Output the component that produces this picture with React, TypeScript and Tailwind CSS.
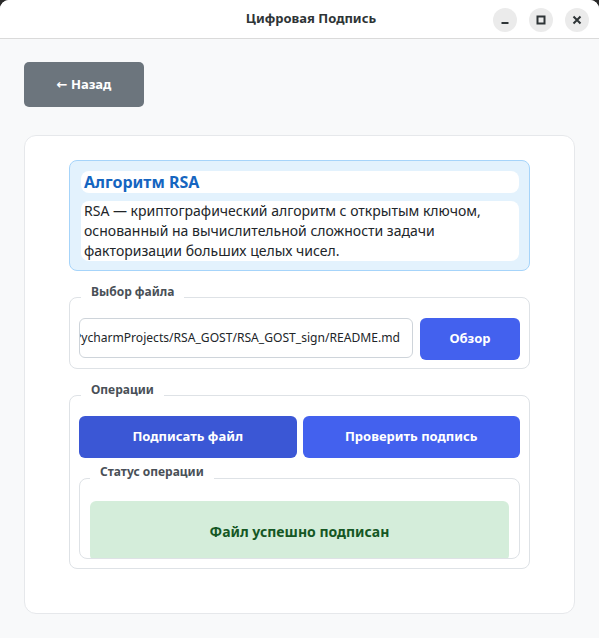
import React from 'react';

const font = { fontFamily: '"Noto Sans", "DejaVu Sans", sans-serif' };

const Group = ({ title, className, children }: { title: string; className?: string; children: React.ReactNode }) => (
  <div className={`relative rounded-[8px] border border-[#dee2e6] ${className ?? ''}`}>
    <span className="absolute left-[11px] top-[-14px] bg-white px-[10px] text-[12px] font-bold leading-[16px] text-[#495057]">
      {title}
    </span>
    {children}
  </div>
);

export default function App() {
  return (
    <div className="h-[638px] w-[599px] bg-[#2a2a2a]" style={font}>
      <div className="flex h-full flex-col overflow-hidden rounded-t-[9px] bg-[#f8f9fa]">
        {/* title bar */}
        <div className="relative flex h-[39px] shrink-0 items-center justify-center border-b border-[#dadada] bg-white">
          <span className="pl-[23px] text-[13px] font-bold text-[#2e3436]">Цифровая Подпись</span>
          <div className="absolute right-[10px] top-[8px] flex gap-[12px]">
            <button className="flex h-[24px] w-[24px] items-center justify-center rounded-full bg-[#ebebeb]">
              <svg width="10" height="10" viewBox="0 0 10 10">
                <rect x="1.5" y="7" width="7" height="2" fill="#2e3436" />
              </svg>
            </button>
            <button className="flex h-[24px] w-[24px] items-center justify-center rounded-full bg-[#ebebeb]">
              <svg width="10" height="10" viewBox="0 0 10 10">
                <rect x="1.5" y="1.5" width="7" height="7" fill="none" stroke="#2e3436" strokeWidth="2" />
              </svg>
            </button>
            <button className="flex h-[24px] w-[24px] items-center justify-center rounded-full bg-[#ebebeb]">
              <svg width="10" height="10" viewBox="0 0 10 10">
                <path d="M1.5 1.5 L8.5 8.5 M8.5 1.5 L1.5 8.5" stroke="#2e3436" strokeWidth="2" />
              </svg>
            </button>
          </div>
        </div>

        {/* body */}
        <div className="flex flex-col px-[24px] pt-[23px]">
          <button className="h-[45px] w-[120px] rounded-[5px] bg-[#6c757d] text-[13px] font-bold text-white">
            ← Назад
          </button>

          <div className="mt-[28px] flex flex-col rounded-[12px] border border-[#e6e8eb] bg-white px-[44px] pb-[44px] pt-[24px]">
            {/* algorithm info */}
            <div className="flex flex-col gap-[8px] rounded-[8px] border border-[#a6d4fa] bg-[#e3f2fd] pb-[9px] pl-[11px] pr-[10px] pt-[10px]">
              <div className="h-[22px] rounded-[8px] bg-white px-[3px] text-[16px] font-bold leading-[22px] text-[#1565c0]">
                Алгоритм RSA
              </div>
              <div className="h-[60px] rounded-[8px] bg-white px-[3px] text-[14px] leading-[20px] text-[#212529]">
                RSA — криптографический алгоритм с открытым ключом, основанный на вычислительной сложности задачи
                факторизации больших целых чисел.
              </div>
            </div>

            {/* file selection */}
            <Group title="Выбор файла" className="mt-[26px] px-[9px] pb-[8px] pt-[20px]">
              <div className="flex items-start gap-[7px]">
                <div className="flex h-[40px] min-w-0 flex-1 items-center overflow-hidden rounded-[6px] border border-[#ced4da] bg-white">
                  <div className="flex min-w-0 flex-1 justify-end overflow-hidden pr-[12px]">
                    <span className="shrink-0 whitespace-nowrap text-[12.1px] text-[#212529]">
                      /home/user/PycharmProjects/RSA_GOST/RSA_GOST_sign/README.md
                    </span>
                  </div>
                </div>
                <button className="h-[42px] w-[100px] shrink-0 rounded-[6px] bg-[#4361ee] text-[13px] font-bold text-white">
                  Обзор
                </button>
              </div>
            </Group>

            {/* operations */}
            <Group title="Операции" className="mt-[26px] px-[9px] pb-[9px] pt-[20px]">
              <div className="flex gap-[6px]">
                <button className="h-[42px] flex-1 rounded-[6px] bg-[#3b57d5] text-[13px] font-bold text-white">
                  Подписать файл
                </button>
                <button className="h-[42px] flex-1 rounded-[6px] bg-[#4361ee] text-[13px] font-bold text-white">
                  Проверить подпись
                </button>
              </div>
              <div className="relative mt-[20px] h-[81px]">
                <span className="absolute left-[11px] top-[-14px] z-10 bg-white px-[10px] text-[12px] font-bold leading-[16px] text-[#495057]">
                  Статус операции
                </span>
                <div className="h-full overflow-hidden rounded-[8px] border border-[#dee2e6] px-[10px] pt-[22px]">
                  <div className="flex h-[60px] items-center justify-center rounded-[6px] bg-[#d4edda] text-[14px] font-bold text-[#155724]">
                    Файл успешно подписан
                  </div>
                </div>
              </div>
            </Group>
          </div>
        </div>
      </div>
    </div>
  );
}
